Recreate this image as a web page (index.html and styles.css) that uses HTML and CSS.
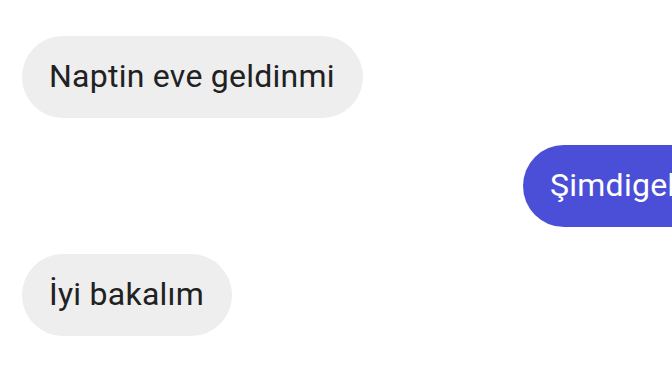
FILE: index.html
```html
<!DOCTYPE html>
<html lang="tr">
<head>
  <meta charset="UTF-8">
  <title>Sohbet</title>
  <link rel="stylesheet" href="styles.css">
</head>
<body>
  <div class="chat">
    <div class="row in">
      <div class="bubble">Naptin eve geldinmi</div>
    </div>
    <div class="row out">
      <div class="bubble">Şimdigeldim</div>
    </div>
    <div class="row in">
      <div class="bubble">İyi bakalım</div>
    </div>
  </div>
</body>
</html>
```

FILE: styles.css
```css
html,
body {
  margin: 0;
  padding: 0;
  background: #fff;
  overflow: hidden;
}
body {
  width: 672px;
  height: 378px;
  font: 32px/1 "Roboto", "Liberation Sans", sans-serif;
  letter-spacing: 0.25px;
  color: #212121;
}
.chat {
  display: flex;
  flex-direction: column;
  gap: 27px;
  padding-top: 36px;
  padding-left: 22px;
}
.row {
  display: flex;
}
.row.out {
  margin-left: 501px;
  white-space: nowrap;
}
.bubble {
  height: 82px;
  box-sizing: border-box;
  display: flex;
  align-items: center;
  padding: 0 28px 2px 27px;
  border-radius: 41px;
  background: #eeeeee;
}
.out .bubble {
  background: #4b4fd8;
  color: #fff;
}
```
